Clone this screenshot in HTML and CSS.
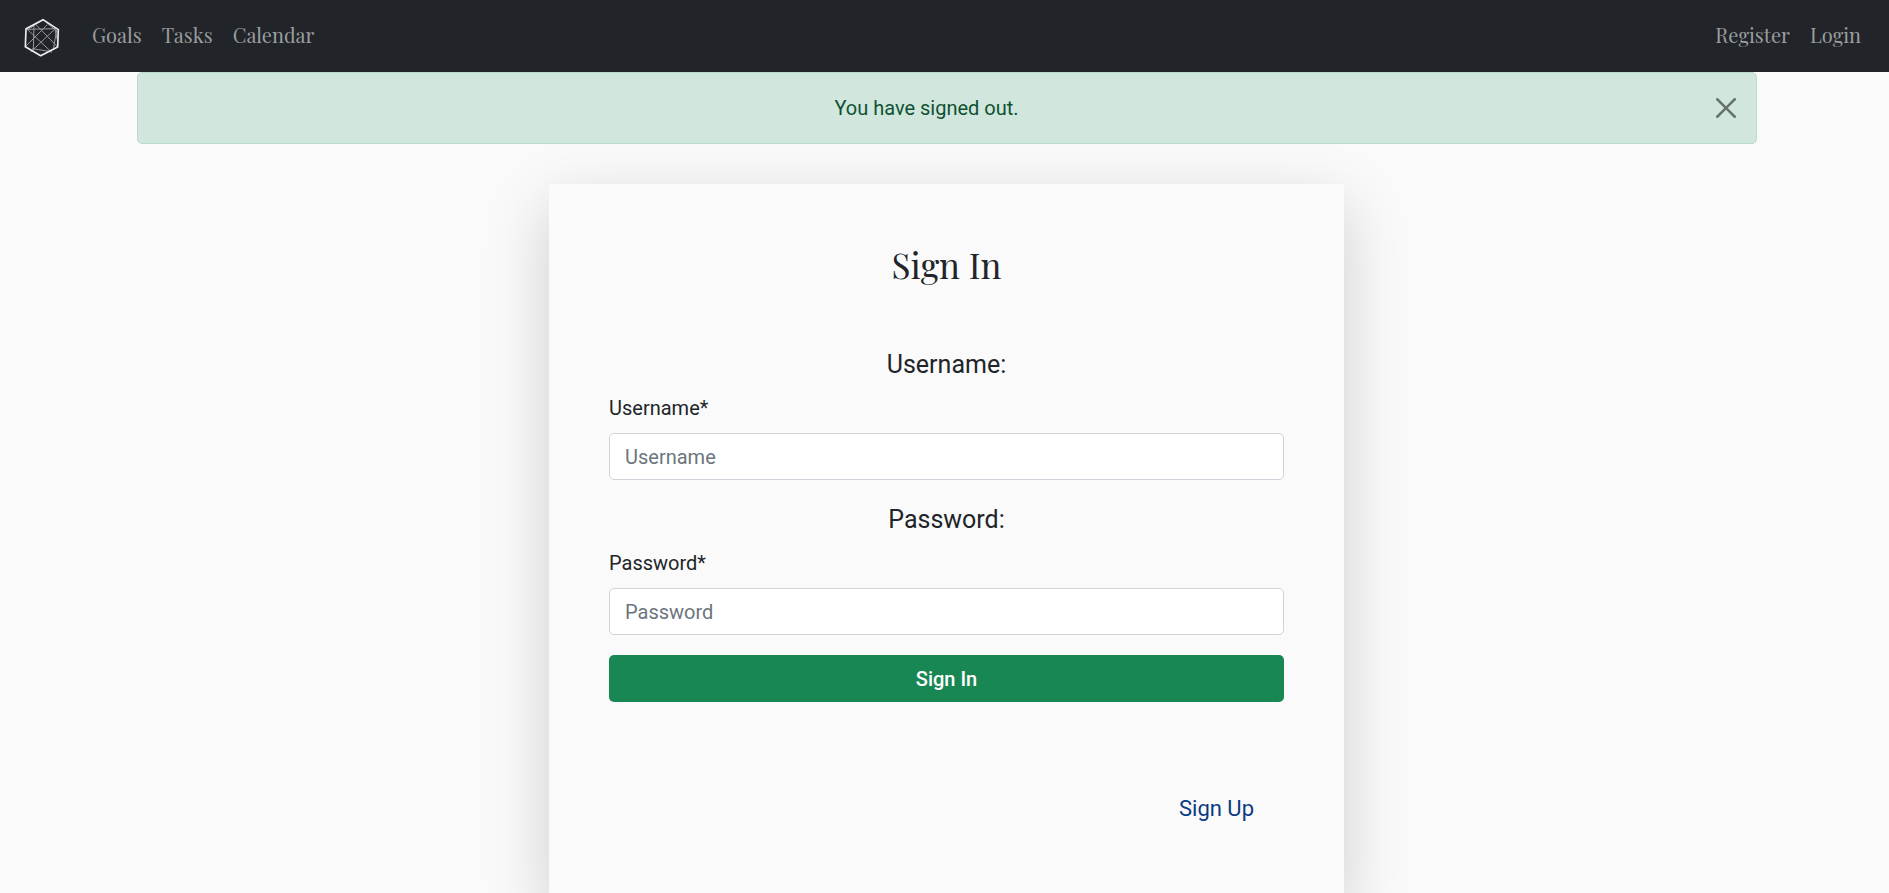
FILE: index.html
```html
<!DOCTYPE html>
<html lang="en">
<head>
<meta charset="utf-8">
<meta name="viewport" content="width=device-width, initial-scale=1">
<title>Sign In</title>
<link rel="stylesheet" href="styles.css">
</head>
<body>
<nav class="navbar">
  <a class="brand" href="#" aria-label="Home">
    <svg class="brand-logo" viewBox="42 30 108 117" fill="none" stroke-linejoin="round" aria-hidden="true">
      <g stroke="#96989a" stroke-width="3">
        <path d="M50 62L126 134M136 62L62 132M46 116L112 50M78 50L143 117M72 50L70 128M52 64L136 62M99 35L52 66M99 35L143 72M134 60L143 100M140 66L130 124M66 122L124 131"/>
      </g>
      <path stroke="#eceded" stroke-width="5" d="M99 35L145 65L143 117L92 143L46 116L48 62Z"/>
    </svg>
  </a>
  <ul class="nav-list">
    <li><a class="nav-link" href="#">Goals</a></li>
    <li><a class="nav-link" href="#">Tasks</a></li>
    <li><a class="nav-link" href="#">Calendar</a></li>
  </ul>
  <ul class="nav-list nav-account">
    <li><a class="nav-link" href="#">Register</a></li>
    <li><a class="nav-link" href="#">Login</a></li>
  </ul>
</nav>
<main class="page">
  <div class="alert" role="alert">
    <span class="alert-text">You have signed out.</span>
    <button class="alert-close" type="button" aria-label="Close">
      <svg viewBox="0 0 16 16" fill="#000" aria-hidden="true"><path d="M.293.293a1 1 0 011.414 0L8 6.586 14.293.293a1 1 0 111.414 1.414L9.414 8l6.293 6.293a1 1 0 01-1.414 1.414L8 9.414l-6.293 6.293a1 1 0 01-1.414-1.414L6.586 8 .293 1.707a1 1 0 010-1.414z"/></svg>
    </button>
  </div>
  <section class="card">
    <h1 class="card-title">Sign In</h1>
    <form class="form">
      <h2 class="field-title">Username:</h2>
      <label class="field-label" for="username">Username*</label>
      <input class="field-input" id="username" type="text" placeholder="Username">
      <h2 class="field-title">Password:</h2>
      <label class="field-label" for="password">Password*</label>
      <input class="field-input" id="password" type="password" placeholder="Password">
      <button class="submit" type="submit">Sign In</button>
    </form>
    <a class="sign-up" href="#">Sign Up</a>
  </section>
</main>
</body>
</html>
```
FILE: styles.css
```css
* {
  box-sizing: border-box;
}

body {
  margin: 0;
  background: #fafafa;
  color: #212529;
  font-family: Roboto, "Liberation Sans", sans-serif;
  font-size: 20px;
  line-height: 30px;
}

.navbar {
  display: flex;
  align-items: center;
  min-height: 72px;
  padding: 0 18px 2px 24px;
  background: #212529;
}

.brand {
  display: flex;
  margin-right: 22px;
  padding-top: 4px;
}

.brand-logo {
  width: 36px;
  height: 39px;
}

.nav-list {
  display: flex;
  margin: 0;
  padding: 0;
  list-style: none;
}

.nav-account {
  margin-left: auto;
}

.nav-link {
  display: block;
  padding: 10px;
  color: #9b9d9f;
  font-family: "Playfair Display", "Liberation Serif", serif;
  text-decoration: none;
}

.page {
  padding-left: 4px;
}

.alert {
  display: flex;
  align-items: center;
  position: relative;
  max-width: 1620px;
  min-height: 72px;
  margin: 0 auto 40px;
  padding: 20px 60px 20px 20px;
  border: 1px solid #badbcc;
  border-radius: 5px;
  background: #d1e7dd;
  color: #0f5132;
}

.alert-text {
  flex: 1;
  text-align: center;
}

.alert-close {
  position: absolute;
  top: 0;
  right: 0;
  display: flex;
  padding: 25px 20px;
  border: 0;
  background: none;
  opacity: 0.5;
  cursor: pointer;
}

.alert-close svg {
  width: 20px;
  height: 20px;
}

.card {
  display: flex;
  flex-direction: column;
  max-width: 795px;
  margin: 0 auto;
  padding: 60px 60px 75px;
  background: #fafafa;
  box-shadow: 0 20px 60px rgba(0, 0, 0, 0.175);
}

.card-title {
  margin: 0 0 64px;
  font-family: "Playfair Display", "Liberation Serif", serif;
  font-size: 35px;
  font-weight: 400;
  line-height: 42px;
  text-align: center;
}

.form {
  display: flex;
  flex-direction: column;
}

.field-title {
  margin: 0 0 13px;
  font-size: 25px;
  font-weight: 400;
  line-height: 30px;
  text-align: center;
}

.field-label {
  margin-bottom: 10px;
}

.field-input {
  width: 100%;
  height: 47px;
  margin-bottom: 25px;
  padding: 0 15px;
  border: 1px solid #ced4da;
  border-radius: 5px;
  background: #fff;
  color: #212529;
  font: inherit;
}

.field-input:last-of-type {
  margin-bottom: 20px;
}

.field-input::placeholder {
  color: #6c757d;
  opacity: 1;
}

.submit {
  height: 47px;
  border: 0;
  border-radius: 5px;
  background: #198754;
  color: #fff;
  font: inherit;
  font-weight: 500;
  cursor: pointer;
}

.sign-up {
  align-self: flex-end;
  margin: 90px 30px 0 0;
  color: #0a3a82;
  font-size: 22px;
  line-height: 33px;
  text-decoration: none;
}
```
